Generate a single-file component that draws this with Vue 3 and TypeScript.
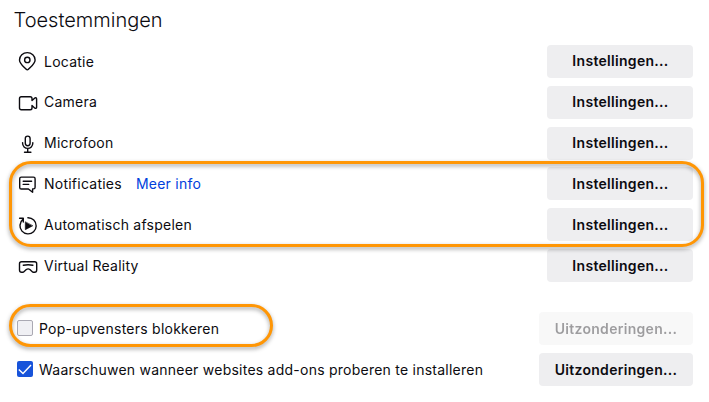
<script setup lang="ts">
interface Permission {
  id: string
  label: string
  link?: string
}

const permissions: Permission[] = [
  { id: 'location', label: 'Locatie' },
  { id: 'camera', label: 'Camera' },
  { id: 'microphone', label: 'Microfoon' },
  { id: 'notifications', label: 'Notificaties', link: 'Meer info' },
  { id: 'autoplay', label: 'Automatisch afspelen' },
  { id: 'vr', label: 'Virtual Reality' },
]

const options = [
  { id: 'popups', label: 'Pop-upvensters blokkeren', checked: false },
  { id: 'addons', label: 'Waarschuwen wanneer websites add-ons proberen te installeren', checked: true },
]
</script>

<template>
  <main class="page">
    <h2 class="title">Toestemmingen</h2>
    <section class="permissions">
      <div v-for="p in permissions" :key="p.id" class="row">
        <svg class="icon" viewBox="0 0 20 20" aria-hidden="true">
          <template v-if="p.id === 'location'">
            <path d="M10.4 18.3q-1.1 1.2-2.2 0C5.6 15.5 1.5 12.5 1.5 8.9a7.8 7.3 0 0 1 15.6 0c0 3.6-4.1 6.6-6.7 9.4Z" />
            <circle cx="9.3" cy="8.9" r="2.7" />
          </template>
          <template v-else-if="p.id === 'camera'">
            <path d="M3.3 4.7h8.9q1.8 0 1.8 1.8v2.1l2.9-2.7q1.7-.6 1.7 1v8.3q0 1.6-1.7 1L14 13.5v2.4q0 1.8-1.8 1.8H3.3q-1.8 0-1.8-1.8V6.5q0-1.8 1.8-1.8Z" />
          </template>
          <template v-else-if="p.id === 'microphone'">
            <rect x="7.3" y="3.1" width="4.8" height="9.6" rx="2.4" />
            <path d="M4.6 9.6v.7a5.1 5.1 0 0 0 10.2 0v-.7M9.7 15.4V19M6.5 19.2h6.4" />
          </template>
          <template v-else-if="p.id === 'notifications'">
            <path d="M3.3 3.1h12.2q1.6 0 1.6 1.6v8.6q0 1.6-1.6 1.6h-.9v3.4L10.4 15H3.3q-1.6 0-1.6-1.6V4.7q0-1.6 1.6-1.6ZM5.2 7.2h8.4M5.2 10.4h5.5" />
          </template>
          <template v-else-if="p.id === 'autoplay'">
            <path d="M9.9 2.7a8.1 8.1 0 1 1-7.9 7.4q.2-3.6 3.1-6M1.6 3.2h3.7V7" />
            <path class="solid" d="M7.3 7.1v7.6l7.2-3.8Z" />
          </template>
          <template v-else>
            <path d="M3.6 5.7h13q2.1 0 2.1 2.1V14q0 2.2-2.1 2.2h-1.3q-.6 0-1-.4l-2.4-2.3q-1.8-1.2-3.6 0L5.9 15.8q-.4.4-1 .4H3.6q-2.1 0-2.1-2.2V7.8q0-2.1 2.1-2.1ZM5.3 9.2q4.8-.8 9.6 0" />
          </template>
        </svg>
        <span class="label">{{ p.label }}</span>
        <a v-if="p.link" class="link">{{ p.link }}</a>
        <button type="button" class="button">Instellingen...</button>
      </div>
      <div class="callout callout-permissions"></div>
    </section>
    <section class="options">
      <div v-for="o in options" :key="o.id" class="row option">
        <span class="checkbox" :class="{ checked: o.checked }" role="checkbox" :aria-checked="o.checked">
          <svg v-if="o.checked" viewBox="0 0 16 16"><path d="m1.8 8.4 4.2 4.1 8-8.6" /></svg>
        </span>
        <span class="label">{{ o.label }}</span>
        <button type="button" class="button wide" :disabled="!o.checked">Uitzonderingen...</button>
      </div>
      <div class="callout callout-option"></div>
    </section>
  </main>
</template>

<style>
body {
  background: #fff;
}
</style>

<style scoped>
.page {
  box-sizing: border-box;
  width: 709px;
  height: 402px;
  overflow: hidden;
  padding: 5px 16px 0 14px;
  background: #fff;
  color: #0c0b10;
  font-family: Inter, "Liberation Sans", sans-serif;
  font-size: 14px;
}
.title {
  margin: 0 0 0 -0.5px;
  height: 39.8px;
  line-height: 30px;
  font-size: 20px;
  font-weight: 300;
}
.permissions,
.options {
  position: relative;
  display: flex;
  flex-direction: column;
  gap: 7.9px;
}
.options {
  margin-top: 29.5px;
}
.row {
  display: flex;
  align-items: center;
  height: 33px;
  padding-left: 4px;
}
.permissions .row:nth-child(n + 2) .label,
.link {
  padding-bottom: 1px;
}
.icon {
  flex: none;
  width: 20px;
  height: 20px;
  margin-right: 6px;
  fill: none;
  stroke: #0c0b10;
  stroke-width: 1.4;
  stroke-linecap: round;
  stroke-linejoin: round;
}
.solid {
  fill: #0c0b10;
  stroke-width: 0.6;
}
.label,
.link {
  letter-spacing: 0.24px;
  white-space: nowrap;
}
.link {
  margin-left: 14px;
  color: #0040dc;
}
.button {
  width: 146px;
  height: 33px;
  margin: 0 0 0 auto;
  padding: 0 0 1px 1px;
  border: 0;
  border-radius: 4px;
  background: #eeeef0;
  color: #0c0b10;
  font: 600 14px Inter, "Liberation Sans", sans-serif;
  letter-spacing: 0.3px;
}
.wide {
  width: 154px;
  padding: 0;
}
.button:disabled {
  opacity: 0.4;
}
.option {
  padding-left: 3px;
}
.checkbox {
  box-sizing: border-box;
  flex: none;
  width: 16px;
  height: 16px;
  margin-right: 6px;
  border: 1px solid #aaa9b3;
  border-radius: 2px;
  background: #f0f0f4;
}
.checked {
  border: 0;
  background: #1753da;
}
.checkbox svg {
  display: block;
  fill: none;
  stroke: #fff;
  stroke-width: 1.4;
}
.callout {
  position: absolute;
  box-sizing: border-box;
  border: 3px solid #ff9605;
  border-radius: 22px;
  filter: drop-shadow(0 2px 2px rgb(0 0 0 / 38%));
  pointer-events: none;
}
.callout-permissions {
  top: 116.2px;
  left: -5.5px;
  width: 695px;
  height: 86px;
}
.callout-option {
  top: -7.5px;
  left: -5.5px;
  width: 264px;
  height: 43px;
}
</style>
